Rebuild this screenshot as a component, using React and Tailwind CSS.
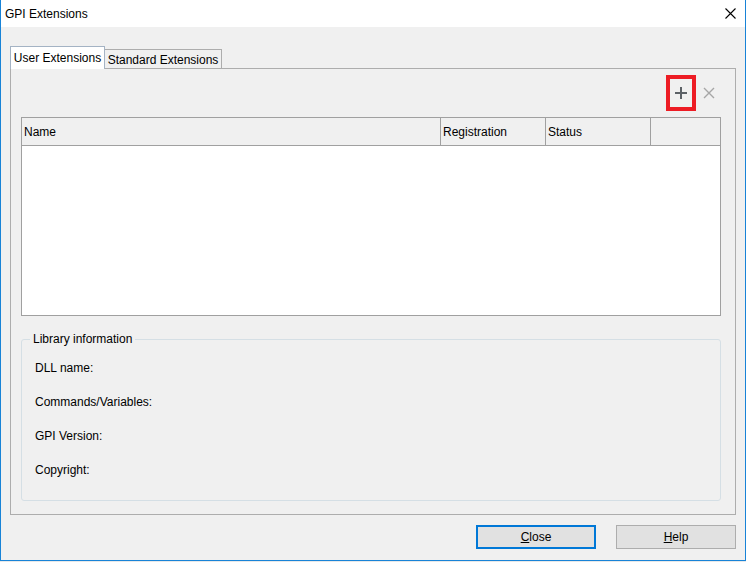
import React from "react";

export default function App() {
  const font = { fontFamily: '"Liberation Sans", Arial, sans-serif' };
  return (
    <div className="w-[746px] h-[562px] bg-[#e8e8e8]" style={font}>
      <div className="w-[746px] h-[561px] bg-[#f0f0f0] border-l border-r border-b border-[#1883d7] flex flex-col text-[12px] text-black">
        {/* title bar */}
        <div className="h-[27px] bg-white flex items-center justify-between shrink-0">
          <span className="pl-[4px] leading-[16px]">GPI Extensions</span>
          <svg width="11" height="11" viewBox="0 0 11 11" className="mr-[9px]">
            <path d="M0.5 0.5 L10.5 10.5 M10.5 0.5 L0.5 10.5" stroke="#000" strokeWidth="1.1" />
          </svg>
        </div>

        {/* tabs */}
        <div className="mt-[19px] mx-[9px] flex flex-col">
          <div className="flex items-end h-[22px]">
            <div className="relative z-10 -mb-px h-[23px] w-[95px] bg-white border-t border-l border-r border-[#a4b3c4] flex items-start justify-center pt-[3px] leading-[16px] whitespace-nowrap">
              User Extensions
            </div>
            <div className="h-[19px] w-[117px] border-t border-r border-[#adadad] flex items-center justify-center leading-[16px] pt-px whitespace-nowrap">
              Standard Extensions
            </div>
          </div>
          <div className="h-[447px] border border-[#adadad] flex flex-col">
            {/* toolbar */}
            <div className="flex items-center justify-end mt-[6px] pr-[20px]">
              <div className="w-[30px] h-[36px] border-[4px] border-[#ed1c24] flex items-center justify-center">
                <svg width="12" height="12" viewBox="0 0 12 12">
                  <rect x="5" y="0" width="2" height="12" fill="#5c6166" />
                  <rect x="0" y="5" width="12" height="2" fill="#5c6166" />
                </svg>
              </div>
              <svg width="12" height="12" viewBox="0 0 12 12" className="ml-[7px]">
                <path d="M1 1 L11 11 M11 1 L1 11" stroke="#a6a6a6" strokeWidth="1.4" />
              </svg>
            </div>

            {/* table */}
            <div className="mt-[6px] ml-[10px] mr-[14px] h-[199px] border border-[#a0a0a0] bg-white flex flex-col">
              <div className="h-[28px] bg-[#f0f0f0] border-b border-[#a0a0a0] flex">
                <div className="w-[419px] border-r border-[#a0a0a0] flex items-center pl-[2px]">Name</div>
                <div className="w-[105px] border-r border-[#a0a0a0] flex items-center pl-[2px]">Registration</div>
                <div className="w-[105px] border-r border-[#a0a0a0] flex items-center pl-[2px]">Status</div>
                <div className="flex-1"></div>
              </div>
            </div>

            {/* library information */}
            <fieldset className="mt-[15px] ml-[10px] mr-[14px] h-[170px] border border-[#d5dfe5] rounded-[3px] px-0">
              <legend className="ml-[8px] px-[3px] leading-[16px]">Library information</legend>
              <div className="pl-[13px] flex flex-col gap-[18px] mt-[13px] leading-[16px]">
                <div>DLL name:</div>
                <div>Commands/Variables:</div>
                <div>GPI Version:</div>
                <div>Copyright:</div>
              </div>
            </fieldset>
          </div>
        </div>

        {/* buttons */}
        <div className="mt-[10px] mr-[9px] flex justify-end gap-[20px]">
          <button className="w-[120px] h-[24px] bg-[#e1e1e1] border-2 border-[#0078d7] flex items-center justify-center leading-[16px]">
            <span><span className="underline">C</span>lose</span>
          </button>
          <button className="w-[120px] h-[24px] bg-[#e1e1e1] border border-[#adadad] flex items-center justify-center leading-[16px]">
            <span><span className="underline">H</span>elp</span>
          </button>
        </div>
      </div>
    </div>
  );
}
